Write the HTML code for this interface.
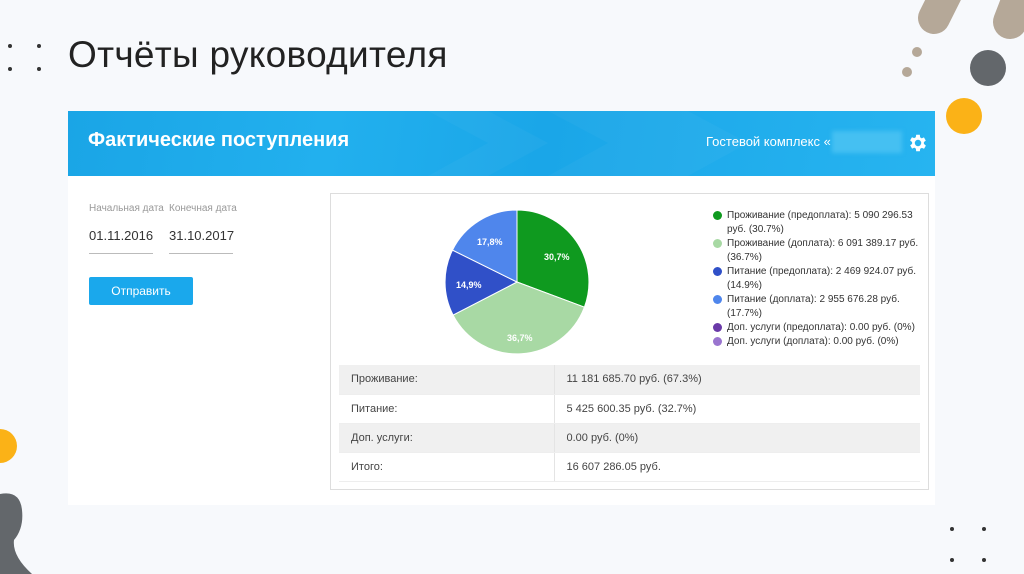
<!DOCTYPE html>
<html><head><meta charset="utf-8"><style>
*{margin:0;padding:0;box-sizing:border-box}
body{width:1024px;height:574px;overflow:hidden;background:#f7f9fc;font-family:"Liberation Sans","DejaVu Sans",sans-serif;position:relative;color:#333}
.abs{position:absolute}
.dot{position:absolute;width:4px;height:4px;border-radius:50%;background:#333}
.h1{left:68px;top:34px;font-size:37px;color:#222;letter-spacing:0.3px}
.card{left:68px;top:111px;width:867px;height:394px;background:#fff}
.hdr{left:68px;top:111px;width:867px;height:65px;background:linear-gradient(100deg,#1aa5e6 0%,#22b0ee 30%,#1aa6e8 55%,#27b4f0 100%);overflow:hidden}
.lbl{font-size:10px;color:#999}
.val{font-size:13px;color:#333}
.line{height:1px;background:#bbb}
.btn{left:89px;top:277px;width:104px;height:28px;background:#1aa8ec;border-radius:2px;color:#fff;font-size:12px;text-align:center;line-height:28px}
.box{left:330px;top:193px;width:599px;height:297px;border:1px solid #ddd;background:#fff}
.leg{font-size:10px;color:#333;line-height:14px}
.leg div{position:relative;padding-left:14px;margin-bottom:0}
.leg i{position:absolute;left:0;top:2px;width:9px;height:9px;border-radius:50%}
table{position:absolute;left:339px;top:365px;width:581px;border-collapse:collapse;font-size:11px;color:#444}
td{height:29px;padding-left:12px;border-bottom:1px solid #eee}
td:first-child{width:215px;border-right:1px solid #e4e4e4}
tr:nth-child(odd) td{background:#f0f0f0}
</style></head><body>
<div class="dot" style="left:8px;top:44px"></div><div class="dot" style="left:37px;top:44px"></div>
<div class="dot" style="left:8px;top:67px"></div><div class="dot" style="left:37px;top:67px"></div>
<div class="abs h1">Отчёты руководителя</div>

<svg class="abs" style="left:0;top:0" width="1024" height="574">
<line x1="934" y1="18" x2="958" y2="-30" stroke="#b5a898" stroke-width="32" stroke-linecap="round"/>
<line x1="1010" y1="22" x2="1030" y2="-30" stroke="#b5a898" stroke-width="34" stroke-linecap="round"/>
<circle cx="917" cy="52" r="5" fill="#b5a898"/><circle cx="907" cy="72" r="5" fill="#b5a898"/>
<circle cx="988" cy="68" r="18" fill="#63676b"/>
<circle cx="964" cy="116" r="18" fill="#fbb217"/>
<circle cx="0" cy="446" r="17" fill="#fbb217"/>
<path d="M0 494 Q20 490 22 510 Q24 528 14 540 Q12 556 32 574 L0 574Z" fill="#63676b"/>
</svg>
<div class="dot" style="left:950px;top:527px"></div><div class="dot" style="left:982px;top:527px"></div>
<div class="dot" style="left:950px;top:558px"></div><div class="dot" style="left:982px;top:558px"></div>

<div class="abs card"></div>
<div class="abs hdr">
<svg class="abs" style="left:0;top:0" width="867" height="65">
<path d="M360 0 L420 32 L360 65 L420 65 L480 32 L420 0Z" fill="#fff" opacity="0.03"/>
<path d="M480 0 L540 32 L480 65 L620 65 L680 32 L620 0Z" fill="#fff" opacity="0.03"/>
</svg>
<div class="abs" style="left:20px;top:18px;font-size:20px;font-weight:bold;color:#fff">Фактические поступления</div>
<div class="abs" style="left:638px;top:23px;font-size:13px;color:#fff">Гостевой комплекс «</div>
<div class="abs" style="left:764px;top:20px;width:70px;height:22px;background:#45c0f2;filter:blur(2px)"></div>
<svg class="abs" style="left:839px;top:21px" width="22" height="22" viewBox="0 0 24 24"><path fill="#fff" d="M19.4 13a7.5 7.5 0 000-2l2.1-1.6-2-3.5-2.5 1a7 7 0 00-1.7-1L15 3h-4l-.4 2.7a7 7 0 00-1.7 1l-2.5-1-2 3.5L6.6 11a7.5 7.5 0 000 2l-2.1 1.6 2 3.5 2.5-1a7 7 0 001.7 1L11 21h4l.4-2.7a7 7 0 001.7-1l2.5 1 2-3.5zM13 15.5a3.5 3.5 0 110-7 3.5 3.5 0 010 7z" transform="translate(-1,0)"/></svg>
</div>

<div class="abs lbl" style="left:89px;top:203px">Начальная дата</div>
<div class="abs lbl" style="left:169px;top:203px">Конечная дата</div>
<div class="abs val" style="left:89px;top:228px">01.11.2016</div>
<div class="abs val" style="left:169px;top:228px">31.10.2017</div>
<div class="abs line" style="left:89px;top:253px;width:64px"></div>
<div class="abs line" style="left:169px;top:253px;width:64px"></div>
<div class="abs btn">Отправить</div>

<div class="abs box"></div>
<svg class="abs" style="left:440px;top:205px" width="160" height="160">
<g transform="translate(-440,-205)" stroke="#fff" stroke-width="1">
<path d="M517 282 L517 210 A72 72 0 0 1 584.4 307.2Z" fill="#0f9a1f"/>
<path d="M517 282 L584.4 307.2 A72 72 0 0 1 453.1 315.1Z" fill="#a8d9a4"/>
<path d="M517 282 L453.1 315.1 A72 72 0 0 1 452.5 250.1Z" fill="#3050c8"/>
<path d="M517 282 L452.5 250.1 A72 72 0 0 1 517 210Z" fill="#4f86ec"/>
</g>
<g fill="#fff" font-size="9" font-weight="bold" font-family="Liberation Sans,sans-serif">
<text x="104" y="55">30,7%</text>
<text x="67" y="136">36,7%</text>
<text x="16" y="83">14,9%</text>
<text x="37" y="40">17,8%</text>
</g></svg>
<div class="abs leg" style="left:713px;top:209px;width:210px">
<div><i style="background:#0f9a1f"></i>Проживание (предоплата): 5 090 296.53 руб. (30.7%)</div>
<div><i style="background:#a8d9a4"></i>Проживание (доплата): 6 091 389.17 руб. (36.7%)</div>
<div><i style="background:#3050c8"></i>Питание (предоплата): 2 469 924.07 руб. (14.9%)</div>
<div><i style="background:#4f86ec"></i>Питание (доплата): 2 955 676.28 руб. (17.7%)</div>
<div><i style="background:#6a3aa8"></i>Доп. услуги (предоплата): 0.00 руб. (0%)</div>
<div><i style="background:#9a75cf"></i>Доп. услуги (доплата): 0.00 руб. (0%)</div>
</div>
<table>
<tr><td>Проживание:</td><td>11 181 685.70 руб. (67.3%)</td></tr>
<tr><td>Питание:</td><td>5 425 600.35 руб. (32.7%)</td></tr>
<tr><td>Доп. услуги:</td><td>0.00 руб. (0%)</td></tr>
<tr><td>Итого:</td><td>16 607 286.05 руб.</td></tr>
</table>
</body></html>
